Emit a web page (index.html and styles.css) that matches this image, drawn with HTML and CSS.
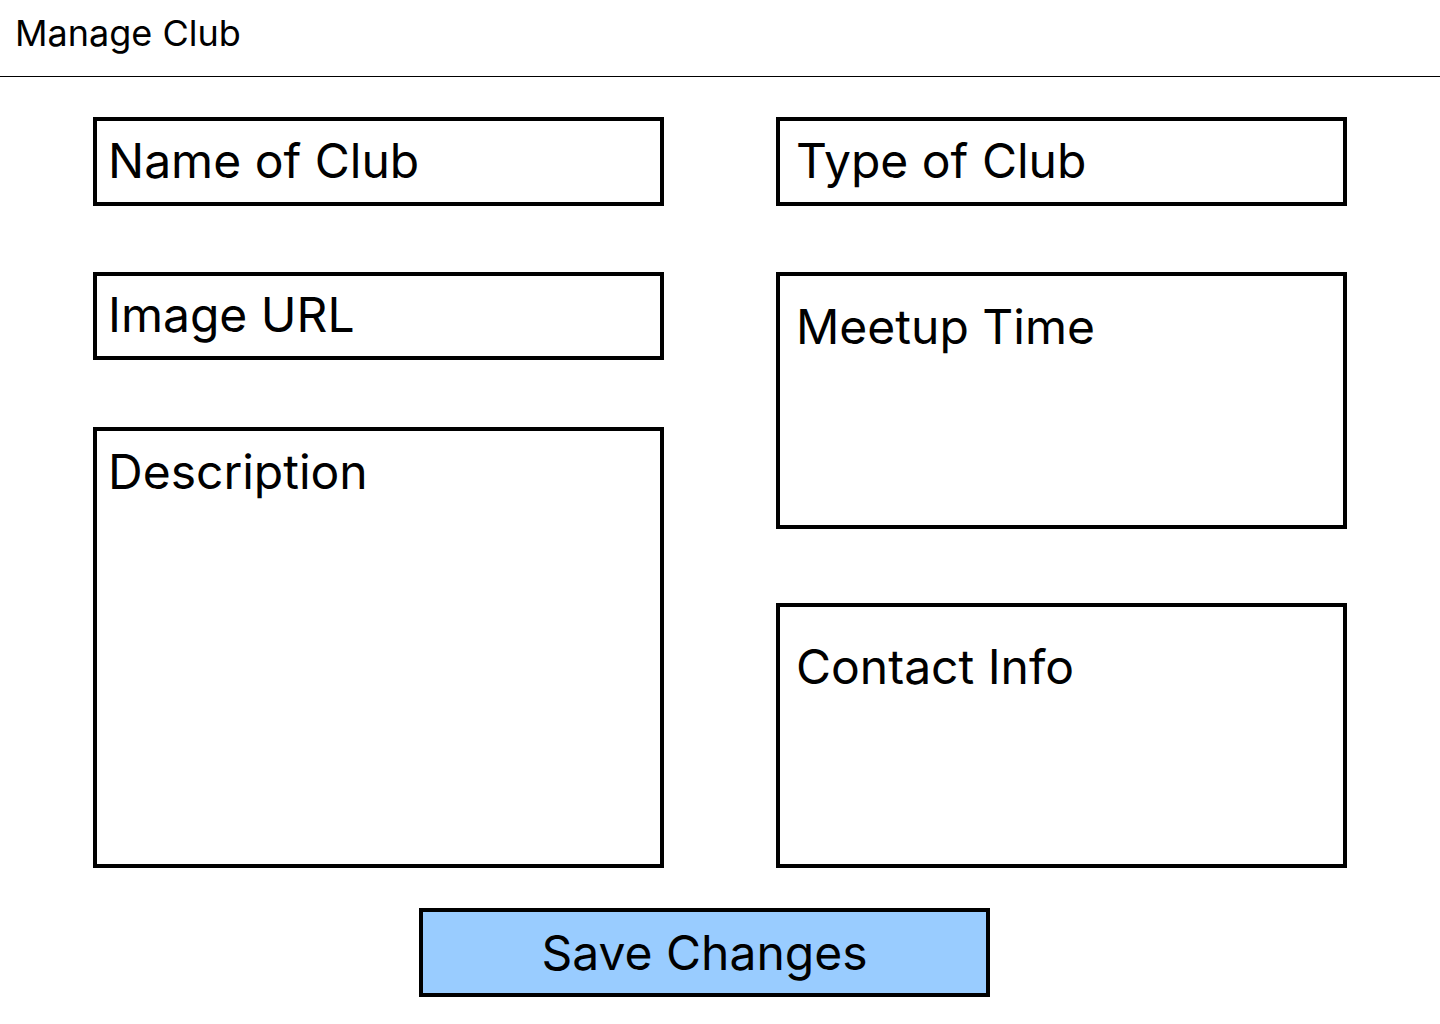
FILE: index.html
```html
<!DOCTYPE html>
<html lang="en">
<head>
    <meta charset="UTF-8">
    <meta name="viewport" content="width=device-width, initial-scale=1.0">
    <title>Manage Club</title>
    <link rel="stylesheet" href="styles.css">
</head>
<body>
    <div class="header">Manage Club</div>

    <div class="form">
        <div class="column left">
            <div class="field name">Name of Club</div>
            <div class="field image">Image URL</div>
            <div class="field desc">Description</div>
        </div>
        <div class="column right">
            <div class="field type">Type of Club</div>
            <div class="field meetup">Meetup Time</div>
            <div class="field contact">Contact Info</div>
        </div>
    </div>

    <div class="actions">
        <a href="javascript:" class="save">Save Changes</a>
    </div>
</body>
</html>
```

FILE: styles.css
```css
* {
    padding: 0;
    margin: 0;
    box-sizing: border-box;
    text-decoration: none;
}

body {
    font-family: Inter, "Liberation Sans", sans-serif;
    color: #000;
    background-color: #fff;
}

.header {
    height: 77px;
    padding: 11px 0 0 15px;
    font-size: 36px;
    border-bottom: 1px solid #000;
}

.form {
    display: flex;
    justify-content: center;
    gap: 112px;
    padding-top: 40px;
}
.column {
    display: flex;
    flex-direction: column;
    width: 571px;
}

.field {
    border: 4px solid #000;
    padding: 10px 0 0 11px;
    font-size: 48px;
}
.right .field {
    padding-left: 16px;
}
.name,
.type {
    height: 89px;
}
.image {
    height: 88px;
    margin-top: 66px;
    padding-top: 9px;
}
.desc {
    height: 441px;
    margin-top: 67px;
    padding-top: 11px;
}
.meetup {
    height: 257px;
    margin-top: 66px;
    padding-top: 21px;
}
.contact {
    height: 265px;
    margin-top: 74px;
    padding-top: 30px;
}

.actions {
    display: flex;
    padding: 40px 0 0 419px;
}
.save {
    display: flex;
    align-items: center;
    justify-content: center;
    width: 571px;
    height: 89px;
    border: 4px solid #000;
    background-color: #99ccff;
    font-size: 48px;
    color: #000;
}
```
